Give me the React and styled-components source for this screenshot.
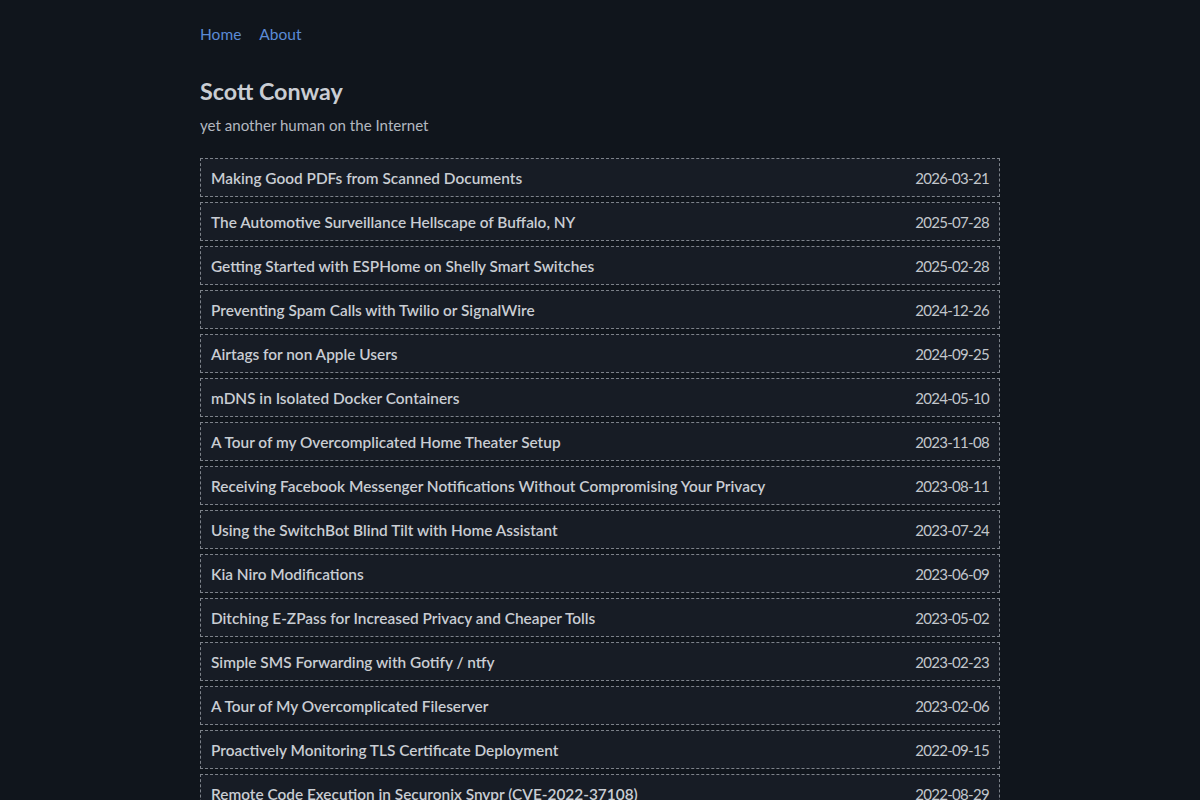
import React from 'react';
import styled, { createGlobalStyle } from 'styled-components';

const posts = [
  ['Making Good PDFs from Scanned Documents', '2026-03-21'],
  ['The Automotive Surveillance Hellscape of Buffalo, NY', '2025-07-28'],
  ['Getting Started with ESPHome on Shelly Smart Switches', '2025-02-28'],
  ['Preventing Spam Calls with Twilio or SignalWire', '2024-12-26'],
  ['Airtags for non Apple Users', '2024-09-25'],
  ['mDNS in Isolated Docker Containers', '2024-05-10'],
  ['A Tour of my Overcomplicated Home Theater Setup', '2023-11-08'],
  ['Receiving Facebook Messenger Notifications Without Compromising Your Privacy', '2023-08-11'],
  ['Using the SwitchBot Blind Tilt with Home Assistant', '2023-07-24'],
  ['Kia Niro Modifications', '2023-06-09'],
  ['Ditching E-ZPass for Increased Privacy and Cheaper Tolls', '2023-05-02'],
  ['Simple SMS Forwarding with Gotify / ntfy', '2023-02-23'],
  ['A Tour of My Overcomplicated Fileserver', '2023-02-06'],
  ['Proactively Monitoring TLS Certificate Deployment', '2022-09-15'],
  ['Remote Code Execution in Securonix Snypr (CVE-2022-37108)', '2022-08-29'],
  ['Self Hosting a Blog', '2022-07-14'],
];

const GlobalStyle = createGlobalStyle`
  html, body {
    margin: 0;
    background: #10151c;
    color: #c7cbd1;
    font-family: Lato, "Noto Sans", sans-serif;
  }
`;

const Page = styled.div`
  width: 800px;
  margin: 0 auto;
  padding-top: 22px;
`;

const Nav = styled.nav`
  display: flex;
  gap: 18px;
  font-size: 15.5px;
  line-height: 24px;
`;

const NavLink = styled.a`
  color: #5b8bd6;
  text-decoration: none;
`;

const Header = styled.header`
  margin-top: 30px;
`;

const Title = styled.h1`
  margin: 0;
  font-size: 23.3px;
  line-height: 30px;
  font-weight: 700;
  color: #c9cdd3;
`;

const Tagline = styled.p`
  margin: 7px 0 0;
  font-size: 15.1px;
  line-height: 24px;
  color: #b3b8c0;
`;

const PostList = styled.ul`
  list-style: none;
  margin: 21px 0 0;
  padding: 0;
  display: flex;
  flex-direction: column;
  gap: 5px;
`;

const PostRow = styled.li`
  display: flex;
  justify-content: space-between;
  align-items: center;
  height: 39px;
  box-sizing: border-box;
  padding: 0 10px;
  border: 1px dashed #7d828a;
  background: #171c25;
`;

const PostTitle = styled.a`
  color: #c9cdd3;
  text-decoration: none;
  font-weight: 600;
  font-size: 15.4px;
`;

const PostDate = styled.span`
  color: #c2c6cc;
  font-size: 15px;
  letter-spacing: -0.7px;
`;

export default function App() {
  return (
    <>
      <GlobalStyle />
      <Page>
        <Nav>
          <NavLink href="#">Home</NavLink>
          <NavLink href="#">About</NavLink>
        </Nav>
        <Header>
          <Title>Scott Conway</Title>
          <Tagline>yet another human on the Internet</Tagline>
        </Header>
        <PostList>
          {posts.map(([title, date]) => (
            <PostRow key={title}>
              <PostTitle href="#">{title}</PostTitle>
              <PostDate>{date}</PostDate>
            </PostRow>
          ))}
        </PostList>
      </Page>
    </>
  );
}
